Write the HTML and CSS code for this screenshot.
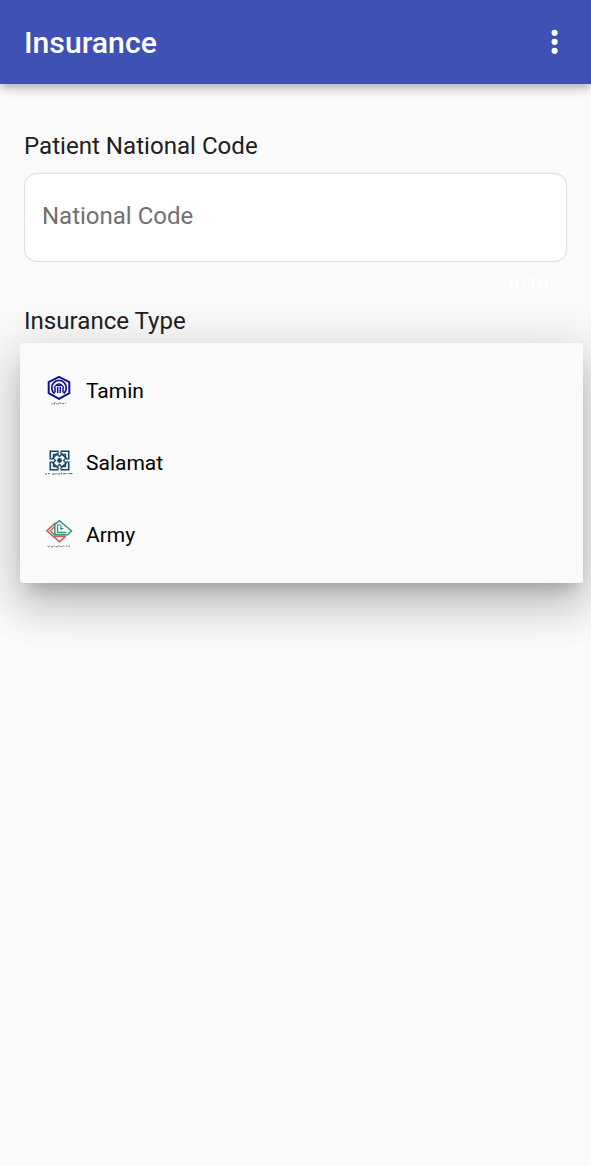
FILE: index.html
```
<!DOCTYPE html>
<html lang="en">
<head>
<meta charset="utf-8">
<title>Insurance</title>
<link rel="stylesheet" href="styles.css">
</head>
<body>
<div class="screen">
  <header class="app-bar">
    <h1 class="title">Insurance</h1>
    <svg class="more" viewBox="0 0 8 28" width="8" height="28" fill="#fff"><circle cx="3.600" cy="4.800" r="3.100"/><circle cx="3.600" cy="13.800" r="3.100"/><circle cx="3.600" cy="22.800" r="3.100"/></svg>
  </header>
  <main class="form">
    <label class="label">Patient National Code</label>
    <div class="field"><span class="placeholder">National Code</span></div>
    <div class="counter">0/10</div>
    <label class="label">Insurance Type</label>
  </main>
  <ul class="menu">
    <li class="item">
      <svg class="logo" viewBox="0 0 32 36" width="32" height="36" fill="none" stroke="#12128c">
        <path d="M16 3.800 26.300 9.200v11L16 25.800 5.700 20.200v-11z" stroke-width="2"/>
        <path d="M11.500 20.500A7.300 7.300 0 1 1 20.500 20.500" stroke-width="1.700"/>
        <path d="M12 19.500v-5M14.700 20v-6M17.300 20v-6M20 19.500v-5" stroke-width="1.500"/>
        <path d="M11 14.800q5-8 10 0M13.500 12.500h5" stroke-width="1.300"/>
        <path d="M8.500 30.300q1 1.500 2 0m1.500-1.300-.8 2.500m2-1q1.500 1 3 0m1-1.500v2m1.500-.5h2.500m1-.8 1 .6" stroke="#555a90" stroke-width=".8"/>
      </svg>
      <span>Tamin</span>
    </li>
    <li class="item">
      <svg class="logo" viewBox="0 0 32 36" width="32" height="36" fill="none" stroke="#17465f">
        <path d="M7.300 6.300h18.400v18.400H7.300z" stroke-width="1.600"/>
        <path d="M16.500 6.500 25.500 15.500 16.500 24.500 7.500 15.500z" stroke-width="1.500"/>
        <path d="M10.500 9.500h4l2 2 2-2h4v4l-2 2 2 2v4h-4l-2-2-2 2h-4v-4l2-2-2-2z" stroke-width="1.300"/>
        <circle cx="16.500" cy="15.500" r="2.400" fill="#17465f" stroke="none"/>
        <path d="M16.500 4.800v3M16.500 23.200v3M5.800 15.500h3M24.200 15.500h3" stroke="#fafafa" stroke-width="1.800"/>
        <path d="M2 29h2m1-.3h2m2 .4h3m1-1v1.300m1.500-.5h3m1-1.200v1.500m1.500-.5h3m1-.5v.8m1.500-.4h4" stroke="#46545c" stroke-width=".9"/>
      </svg>
      <span>Salamat</span>
    </li>
    <li class="item">
      <svg class="logo" viewBox="0 0 32 36" width="32" height="36" fill="none">
        <path d="M12.500 5.800 4 13.800l12.500 11 6-5.300" stroke="#c4564c" stroke-width="1.500"/>
        <path d="M10.800 10.300 7.500 13.800l3.800 3.700h11.200M9.800 19.500h13" stroke="#cc6257" stroke-width="1.300"/>
        <path d="M16.500 3.800 28.500 14l-4 3.700H11.800V7.300z" stroke="#339184" stroke-width="1.500"/>
        <path d="M14.500 7.500v7.800h9M14.500 8h4M17 11.500h3.500M18 9v4" stroke="#339184" stroke-width="1.200"/>
        <path d="M4.500 29q1 1.500 2.500 0m1 .8h2m1-1.200v1m1.500.2q1.500.5 2.500-.7m1-.8v1.500m1.500-.3h2m1-1 .8 1.300m1.500-.6h1.200m1 0 2-.3" stroke="#555" stroke-width=".8"/>
      </svg>
      <span>Army</span>
    </li>
  </ul>
  <div class="nav-edge"></div>
</div>
</body>
</html>
```
FILE: styles.css
```
* { box-sizing: border-box; }
body {
  margin: 0;
  background: #fafafa;
  font-family: Roboto, "Liberation Sans", sans-serif;
}
.screen {
  height: 1175px;
  display: flex;
  flex-direction: column;
  overflow: hidden;
}
.app-bar {
  height: 84px;
  flex: none;
  padding: 0 32px 0 24px;
  display: flex;
  align-items: center;
  justify-content: space-between;
  background: #3f51b5;
  box-shadow: 0 3px 7px -1.500px rgba(0,0,0,.16), 0 6px 9px rgba(0,0,0,.12), 0 1.500px 15px rgba(0,0,0,.1);
}
.title {
  margin: 2px 0 0;
  font-size: 30.200px;
  line-height: 36px;
  font-weight: 500;
  color: #fff;
}
.form {
  position: relative;
  z-index: 1;
  padding: 48px 24px 0;
  height: 259px;
  flex: none;
  display: flex;
  flex-direction: column;
}
.label {
  font-size: 24.100px;
  line-height: 28px;
  color: #202020;
}
.field {
  height: 89px;
  margin-top: 12.500px;
  padding: 0 17px 3px;
  display: flex;
  align-items: center;
  background: #fff;
  border: 1px solid #e0e0e0;
  border-radius: 13px;
  box-shadow: 0 0 1px #e6e6e6;
}
.placeholder {
  font-size: 24px;
  color: #707070;
}
.counter {
  height: 45.500px;
  padding: 11px 18px 0;
  text-align: right;
  font-size: 18px;
  line-height: 22px;
  letter-spacing: .6px;
  color: #fff;
}
.menu {
  list-style: none;
  margin: 0 8px 0 20px;
  padding: 12px 24px 12px 23px;
  height: 240px;
  flex: none;
  position: relative;
  background: #fafafa;
  border-radius: 3px;
  box-shadow: 0 12px 17px -7.500px rgba(0,0,0,.2), 0 24px 42px 3px rgba(0,0,0,.14), 0 9px 54px 7.500px rgba(0,0,0,.12);
}
.item {
  height: 72px;
  display: flex;
  align-items: center;
  gap: 11px;
  font-size: 21px;
  color: #000;
}
.logo { flex: none; }
.nav-edge {
  height: 10px;
  margin-top: auto;
  background: #fff;
  border-top: 2px solid #fcfcfc;
}
```
